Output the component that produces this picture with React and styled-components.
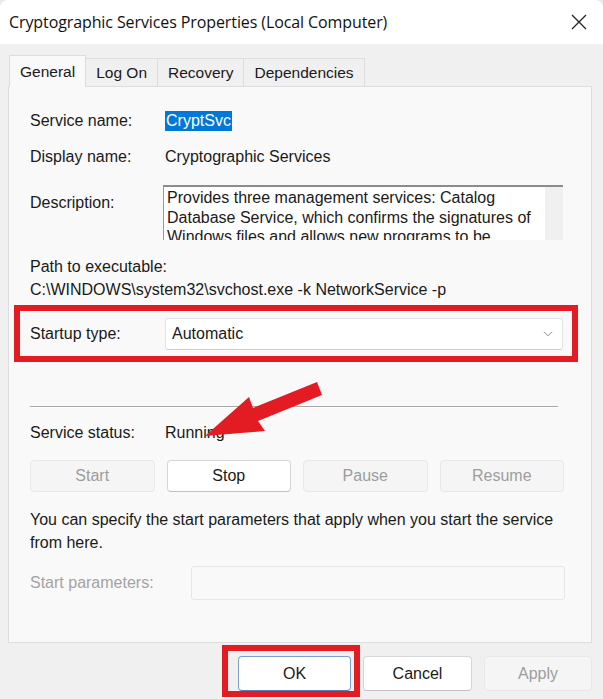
import styled, { createGlobalStyle } from "styled-components";

const GlobalStyle = createGlobalStyle`
  html, body {
    margin: 0;
    padding: 0;
    background: #e9e9e9;
  }
  body {
    font-family: "Liberation Sans", Arial, sans-serif;
  }
`;

const Window = styled.div`
  position: relative;
  width: 603px;
  height: 699px;
  background: #f0f0f0;
  border-radius: 8px 8px 0 0;
  overflow: hidden;
  color: #1a1a1a;
  font-size: 16px;
`;

const TitleBar = styled.div`
  display: flex;
  align-items: center;
  justify-content: space-between;
  height: 44px;
  padding: 0 16px 0 9px;
  background: #ffffff;
`;

const Title = styled.div`
  font-family: "Open Sans", "Noto Sans", sans-serif;
  font-size: 16px;
  letter-spacing: -0.1px;
  color: #111;
`;

const CloseIcon = () => (
  <svg width="16" height="16" viewBox="0 0 16 16">
    <path d="M1 1 L15 15 M15 1 L1 15" stroke="#222" strokeWidth="1.3" fill="none" />
  </svg>
);

const TabStrip = styled.div`
  display: flex;
  align-items: flex-end;
  height: 42px;
  padding-left: 9px;
  box-sizing: border-box;
`;

const Tab = styled.div`
  display: flex;
  align-items: center;
  justify-content: center;
  box-sizing: border-box;
  padding: 0 10px;
  font-size: 15.5px;
  border: 1px solid #dddddd;
  border-bottom: none;
  margin-left: ${(p) => (p.$first ? "0" : "-1px")};
  height: ${(p) => (p.$active ? "32px" : "28px")};
  margin-bottom: ${(p) => (p.$active ? "-1px" : "0")};
  background: ${(p) => (p.$active ? "#f9f9f9" : "#f0f0f0")};
  position: relative;
  z-index: ${(p) => (p.$active ? 2 : 1)};
`;

const Panel = styled.div`
  position: relative;
  display: flex;
  flex-direction: column;
  box-sizing: border-box;
  height: 557px;
  margin: 0 11px 0 8px;
  padding: 0 28px 0 21px;
  background: #f9f9f9;
  border: 1px solid #dddddd;
`;

const InfoRow = styled.div`
  display: grid;
  grid-template-columns: ${(p) => p.$label || "135px"} 1fr;
  align-items: ${(p) => (p.$top ? "start" : "center")};
  margin-top: ${(p) => p.$gap}px;
  line-height: 20px;
`;

const Label = styled.div`
  color: ${(p) => (p.$muted ? "#a3a3a3" : "#1a1a1a")};
  padding-top: ${(p) => p.$pad || 0}px;
`;

const Selected = styled.span`
  justify-self: start;
  background: #0078d7;
  color: #ffffff;
  padding: 0 1px;
`;

const DescBox = styled.div`
  display: flex;
  height: 55px;
  margin-left: -2px;
  background: #ffffff;
  border-top: 2px solid #8c8c8c;
  border-left: 1px solid #9a9a9a;
  box-sizing: border-box;
  overflow: hidden;
`;

const DescText = styled.div`
  flex: 1;
  padding: 1px 4px 0 3px;
  line-height: 19.5px;
`;

const ScrollTrack = styled.div`
  width: 18px;
  background: #f0f0f0;
`;

const PathText = styled.div`
  line-height: 20px;
  margin-top: ${(p) => p.$gap}px;
`;

const Highlighted = styled.div`
  position: relative;
  &::after {
    content: "";
    position: absolute;
    top: ${(p) => p.$t}px;
    right: ${(p) => p.$r}px;
    bottom: ${(p) => p.$b}px;
    left: ${(p) => p.$l}px;
    border: 6px solid #e31c24;
    pointer-events: none;
  }
`;

const Dropdown = styled.div`
  display: flex;
  align-items: center;
  justify-content: space-between;
  height: 32px;
  box-sizing: border-box;
  padding: 0 9px 0 6px;
  background: #ffffff;
  border: 1px solid #e3e3e3;
  border-bottom-color: #cfcfcf;
  border-radius: 3px;
`;

const Chevron = () => (
  <svg width="10" height="6" viewBox="0 0 10 6">
    <path d="M1 0.8 L5 4.8 L9 0.8" stroke="#8a8a8a" strokeWidth="1" fill="none" />
  </svg>
);

const Separator = styled.div`
  margin: 56px 5px 0 0;
  border-top: 1px solid #a9a9a9;
  border-bottom: 1px solid #ffffff;
`;

const ButtonRow = styled.div`
  display: grid;
  grid-template-columns: repeat(4, 1fr);
  gap: 12px;
  margin: 17px -1px 0 0;
`;

const Button = styled.div`
  display: flex;
  align-items: center;
  justify-content: center;
  box-sizing: border-box;
  height: ${(p) => p.$h || 32}px;
  width: ${(p) => (p.$w ? `${p.$w}px` : "auto")};
  font-size: 16px;
  border-radius: 4px;
  background: ${(p) => (p.$disabled ? "#f5f5f5" : "#ffffff")};
  color: ${(p) => (p.$disabled ? "#9d9d9d" : "#1a1a1a")};
  border: 1px solid ${(p) => (p.$accent ? "#7aa0cf" : p.$disabled ? "#e8e8e8" : "#d6d6d6")};
  border-bottom-color: ${(p) => (p.$accent ? "#4f7fbd" : p.$disabled ? "#e8e8e8" : "#c2c2c2")};
`;

const HelpText = styled.div`
  margin-top: 16px;
  line-height: 23px;
`;

const ParamInput = styled.div`
  height: 34px;
  margin-right: -2px;
  box-sizing: border-box;
  background: #f9f9f9;
  border: 1px solid #e6e6e6;
  border-radius: 3px;
`;

const Footer = styled.div`
  display: flex;
  justify-content: flex-end;
  gap: 12px;
  padding: 13px 11px 0 0;
`;

const ArrowLayer = styled.svg`
  position: absolute;
  left: 0;
  top: 0;
  pointer-events: none;
`;

export default function App() {
  return (
    <>
      <GlobalStyle />
      <Window>
        <TitleBar>
          <Title>Cryptographic Services Properties (Local Computer)</Title>
          <CloseIcon />
        </TitleBar>

        <TabStrip>
          <Tab $active $first>General</Tab>
          <Tab>Log On</Tab>
          <Tab>Recovery</Tab>
          <Tab>Dependencies</Tab>
        </TabStrip>

        <Panel>
          <InfoRow $gap={24}>
            <Label>Service name:</Label>
            <Selected>CryptSvc</Selected>
          </InfoRow>
          <InfoRow $gap={16}>
            <Label>Display name:</Label>
            <div>Cryptographic Services</div>
          </InfoRow>
          <InfoRow $gap={18} $top>
            <Label $pad={8}>Description:</Label>
            <DescBox>
              <DescText>
                Provides three management services: Catalog Database Service, which confirms the
                signatures of Windows files and allows new programs to be installed
              </DescText>
              <ScrollTrack />
            </DescBox>
          </InfoRow>
          <PathText $gap={17}>Path to executable:</PathText>
          <PathText $gap={3}>C:\WINDOWS\system32\svchost.exe -k NetworkService -p</PathText>

          <Highlighted $t={-13} $r={-15} $b={-12} $l={-16} style={{ marginTop: 18 }}>
            <InfoRow $gap={0}>
              <Label>Startup type:</Label>
              <Dropdown>
                <span>Automatic</span>
                <Chevron />
              </Dropdown>
            </InfoRow>
          </Highlighted>

          <Separator />

          <InfoRow $gap={15}>
            <Label>Service status:</Label>
            <div>Running</div>
          </InfoRow>

          <ButtonRow>
            <Button $disabled>Start</Button>
            <Button>Stop</Button>
            <Button $disabled>Pause</Button>
            <Button $disabled>Resume</Button>
          </ButtonRow>

          <HelpText>
            You can specify the start parameters that apply when you start the service
            <br />
            from here.
          </HelpText>

          <InfoRow $gap={12} $label="161px">
            <Label $muted>Start parameters:</Label>
            <ParamInput />
          </InfoRow>
        </Panel>

        <Footer>
          <Highlighted $t={-11} $r={-9} $b={-6} $l={-16}>
            <Button $w={113} $h={35} $accent>OK</Button>
          </Highlighted>
          <Button $w={109} $h={35}>Cancel</Button>
          <Button $w={108} $h={35} $disabled>Apply</Button>
        </Footer>

        <ArrowLayer width="603" height="699" viewBox="0 0 603 699">
          <polygon
            points="205,436 249,397 253,408 317,382 322,395 258,421 265,431"
            fill="#e31c24"
          />
        </ArrowLayer>
      </Window>
    </>
  );
}
